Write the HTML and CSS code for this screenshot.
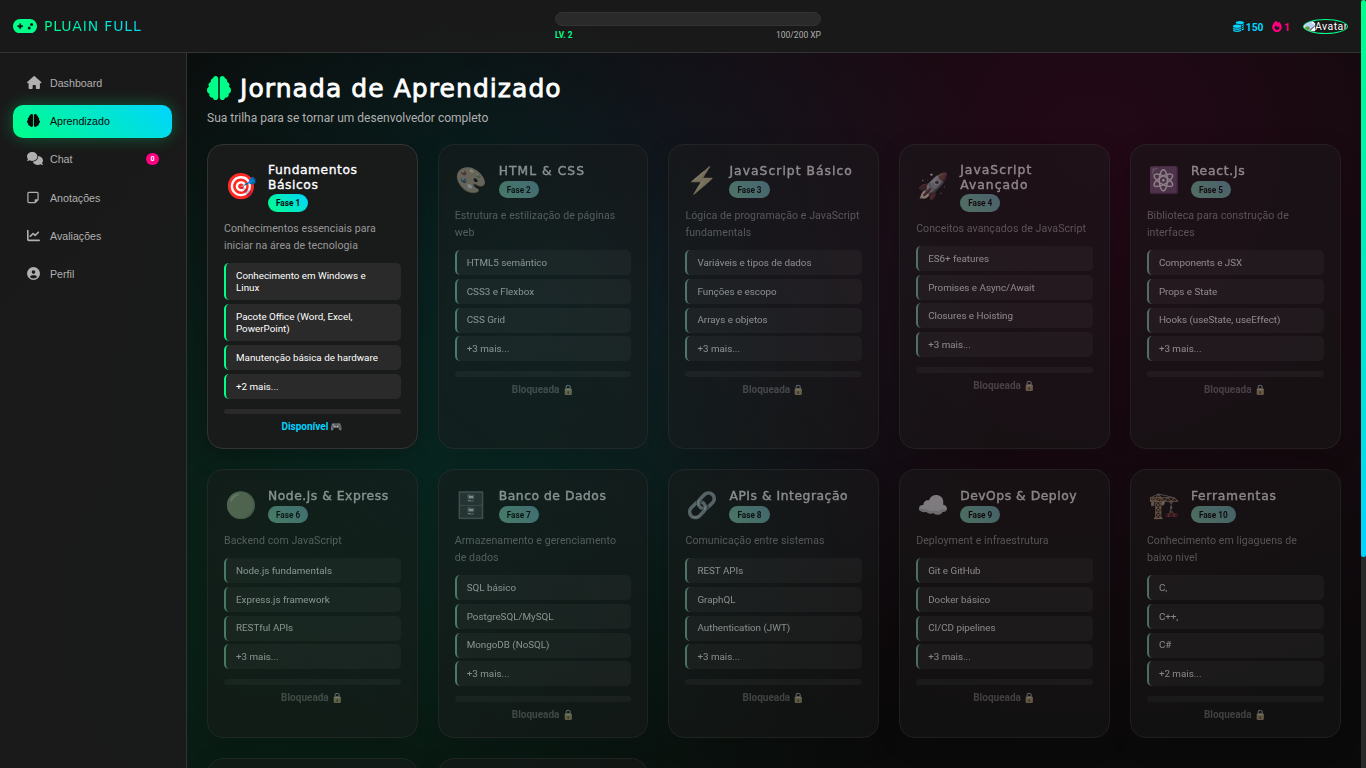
FILE: index.html
```html
<!DOCTYPE html>
<html lang="pt-BR">
<head>
<meta charset="utf-8">
<title>Pluain Full</title>
<link rel="stylesheet" href="styles.css">
</head>
<body>
<svg class="defs" width="0" height="0">
<symbol id="brain" viewBox="0 0 512 512"><path d="M184 0c30.9 0 56 25.1 56 56V456c0 30.9-25.1 56-56 56c-28.9 0-52.7-21.9-55.7-50.1c-5.2 1.4-10.7 2.1-16.3 2.1c-35.3 0-64-28.7-64-64c0-7.4 1.3-14.6 3.6-21.2C21.4 367.4 0 338.2 0 304c0-31.9 18.7-59.5 45.8-72.3C37.1 220.8 32 207 32 192c0-30.7 21.6-56.3 50.4-62.6C80.8 123.9 80 118 80 112c0-29.9 20.6-55.1 48.3-62.1C131.3 21.9 155.1 0 184 0zM328 0c28.9 0 52.6 21.9 55.7 49.9c27.8 7 48.3 32.1 48.3 62.1c0 6-.8 11.9-2.4 17.4c28.8 6.2 50.4 31.9 50.4 62.6c0 15-5.1 28.8-13.8 39.7C493.300 244.500 512 272.100 512 304c0 34.200-21.400 63.400-51.600 74.800c2.300 6.600 3.600 13.800 3.600 21.200c0 35.300-28.700 64-64 64c-5.600 0-11.100-.7-16.300-2.100c-3 28.200-26.800 50.100-55.700 50.100c-30.900 0-56-25.100-56-56V56c0-30.900 25.100-56 56-56z"/></symbol>
</svg>
<header class="topbar">
  <div class="brand">
    <svg class="brand-icon" viewBox="0 64 640 384"><path d="M192 64C86 64 0 150 0 256S86 448 192 448H448c106 0 192-86 192-192s-86-192-192-192H192zM496 168a40 40 0 1 1 0 80 40 40 0 1 1 0-80zM392 304a40 40 0 1 1 80 0 40 40 0 1 1 -80 0zM168 200c0-13.300 10.700-24 24-24s24 10.700 24 24v32h32c13.300 0 24 10.700 24 24s-10.700 24-24 24H216v32c0 13.300-10.700 24-24 24s-24-10.700-24-24V280H136c-13.300 0-24-10.700-24-24s10.700-24 24-24h32V200z"/></svg>
    <span class="brand-name">PLUAIN FULL</span>
  </div>
  <div class="xp">
    <div class="xp-bar"></div>
    <div class="xp-info"><span class="level">LV. 2</span><span class="points">100/200 XP</span></div>
  </div>
  <div class="stats">
    <span class="coins"><svg class="coin-icon" viewBox="0 0 512 512"><path d="M512 80c0 18-14.300 34.600-38.400 48c-29.100 16.100-72.500 27.500-122.300 30.900c-3.700-1.800-7.400-3.500-11.300-5C300.600 137.400 248.200 128 192 128c-8.300 0-16.400 .2-24.500 .6l-1.100-.6C142.300 114.600 128 98 128 80c0-44.200 86-80 192-80S512 35.800 512 80zM160.700 161.100c10.200-.7 20.700-1.100 31.300-1.100c62.200 0 117.400 12.300 152.500 31.400C369.300 204.900 384 221.700 384 240c0 45-86 80-192 80S0 285 0 240c0-40 70-73 160.700-78.900zM416 240c0-21-10.600-38.700-24.500-53.200c42-6 87.500-18 120.500-40V176c0 26-38 52-96 67zM384 336c0 44-86 80-192 80S0 380 0 336V290c45 48 115 62 192 62s150-15 192-62zm32-57c40-8 72-20 96-37v30c0 28-38 50-96 65zM0 386c45 48 115 62 192 62s150-15 192-62v46c0 44-86 80-192 80S0 476 0 432zM416 375c40-8 72-20 96-37v30c0 28-38 50-96 65z"/></svg><b>150</b></span>
    <span class="streak"><svg class="fire-icon" viewBox="0 0 448 512"><path d="M159.300 5.400c7.800-7.300 19.900-7.200 27.700 .1c27.600 25.900 53.500 53.800 77.700 84c11-14.400 23.500-30.100 37-42.900c7.900-7.400 20.100-7.400 28 .1c34.600 33 63.900 76.600 84.500 118c20.300 40.800 33.800 82.500 33.800 111.900C448 404.200 348.200 512 224 512C98.400 512 0 404.100 0 276.500c0-38.400 17.800-85.300 45.400-131.700C73.300 97.700 112.700 48.600 159.300 5.400zM225.700 416c25.300 0 47.700-7 68.800-21c42.100-29.400 53.400-88.200 28.100-134.400c-4.500-9-16-9.600-22.500-2l-25.200 29.300c-6.600 7.600-18.500 7.400-24.700-.5c-16.500-21-46-58.500-62.800-79.800c-6.300-8-18.300-8.100-24.700-.1c-33.800 42.500-50.800 69.300-50.800 99.400C112 375.400 162.600 416 225.700 416z"/></svg><b>1</b></span>
    <span class="avatar"><svg class="broken" viewBox="0 0 14 14"><path fill="#fff" d="M0 0h9l4 4v9H0z"/><path fill="#bcd0f4" d="M1 1h8v3h3v4L6 12H1z"/><path fill="#5aa03c" d="M1 12V9q3-3 5-1l1 2-2 2z"/><path fill="#555" d="M6 12l7-6v1l-6 6z"/></svg><span>Avatar</span></span>
  </div>
</header>
<div class="layout">
  <nav class="sidebar">
    <a class="nav-item"><svg class="nav-icon w-home" viewBox="0 0 576 512"><path d="M575.800 255.500c0 18-15 32.100-32 32.100h-32l.7 160.200c0 2.700-.2 5.400-.5 8.100V472c0 22.100-17.900 40-40 40H456c-1.100 0-2.200 0-3.300-.1c-1.400 .1-2.800 .1-4.200 .1H416 392c-22.100 0-40-17.900-40-40V448 384c0-17.700-14.300-32-32-32H256c-17.700 0-32 14.300-32 32v64 24c0 22.100-17.900 40-40 40H160 128.100c-1.500 0-3-.1-4.500-.2c-1.200 .1-2.400 .2-3.600 .2H104c-22.100 0-40-17.900-40-40V360c0-.9 0-1.900 .1-2.800V287.600H32c-18 0-32-14-32-32.100c0-9 3-17 10-24L266.400 8c7-7 15-8 22-8s15 2 21 7L564.800 231.500c8 7 12 15 11 24z"/></svg><span>Dashboard</span></a>
    <a class="nav-item active"><svg class="nav-icon"><use href="#brain"/></svg><span>Aprendizado</span></a>
    <a class="nav-item"><svg class="nav-icon w-chat" viewBox="0 0 640 512"><path d="M208 352c114.900 0 208-78.800 208-176S322.900 0 208 0S0 78.800 0 176c0 38.600 14.700 74.300 39.600 103.400c-3.500 9.400-8.700 17.700-14.200 24.700c-4.800 6.200-9.700 11-13.300 14.300c-1.800 1.600-3.300 2.900-4.300 3.700c-.5 .4-.9 .7-1.100 .8l-.2 .2C1 327.200-1.400 334.400 .8 340.900S9.100 352 16 352c21.800 0 43.800-5.600 62.100-12.500c9.200-3.500 17.800-7.400 25.200-11.400C134.100 343.300 169.800 352 208 352zM448 176c0 112.300-99.100 196.900-216.500 207C255.800 457.400 336.400 512 432 512c38.200 0 73.900-8.700 104.700-23.900c7.500 4 16 7.900 25.200 11.400c18.300 6.900 40.300 12.500 62.100 12.500c6.900 0 13.100-4.500 15.200-11.100c2.100-6.600-.2-13.800-5.800-17.900l-.2-.2c-.2-.2-.6-.4-1.100-.8c-1-.8-2.500-2-4.300-3.700c-3.600-3.300-8.500-8.100-13.300-14.300c-5.500-7-10.700-15.400-14.200-24.700c24.900-29 39.600-64.700 39.600-103.400c0-92.800-84.900-168.900-192.600-175.500c.4 5.100 .6 10.300 .6 15.500z"/></svg><span>Chat</span><i class="count">0</i></a>
    <a class="nav-item"><svg class="nav-icon w-note" viewBox="0 0 448 512"><path d="M64 80c-8.800 0-16 7.200-16 16V416c0 8.800 7.200 16 16 16H288V352c0-17.700 14.300-32 32-32h80V96c0-8.800-7.200-16-16-16H64zM288 480H64c-35.300 0-64-28.700-64-64V96C0 60.700 28.700 32 64 32H384c35.300 0 64 28.700 64 64V320v5.500c0 17-6.700 33.300-18.700 45.300l-90.500 90.500c-12 12-28.300 18.700-45.300 18.700H288z"/></svg><span>Anotações</span></a>
    <a class="nav-item"><svg class="nav-icon" viewBox="0 0 512 512"><path d="M64 64c0-17.700-14.300-32-32-32S0 46.300 0 64V400c0 44.200 35.800 80 80 80H480c17.700 0 32-14.300 32-32s-14.300-32-32-32H80c-8.800 0-16-7.200-16-16V64zm406.600 86.600c12.500-12.500 12.500-32.800 0-45.300s-32.800-12.500-45.300 0L320 210.700l-57.400-57.400c-12.500-12.500-32.800-12.500-45.300 0l-112 112c-12.500 12.500-12.500 32.800 0 45.300s32.800 12.500 45.300 0L240 221.300l57.400 57.400c12.500 12.500 32.800 12.500 45.300 0l128-128z"/></svg><span>Avaliações</span></a>
    <a class="nav-item"><svg class="nav-icon" viewBox="0 0 512 512"><path d="M399 384.200C376.900 345.800 335.400 320 288 320H224c-47.400 0-88.900 25.800-111 64.200c35.200 39.200 86.200 63.800 143 63.800s107.800-24.700 143-63.800zM0 256a256 256 0 1 1 512 0A256 256 0 1 1 0 256zm256 16a72 72 0 1 0 0-144 72 72 0 1 0 0 144z"/></svg><span>Perfil</span></a>
  </nav>
  <main class="content">
    <h1 class="page-title"><svg class="title-icon"><use href="#brain"/></svg><span>Jornada de Aprendizado</span></h1>
    <p class="subtitle">Sua trilha para se tornar um desenvolvedor completo</p>
    <div class="grid">
      <article class="card">
        <div class="head"><span class="emoji">🎯</span><div><h3 class="tight">Fundamentos<br>Básicos</h3><span class="phase">Fase 1</span></div></div>
        <p class="desc">Conhecimentos essenciais para<br>iniciar na área de tecnologia</p>
        <ul><li>Conhecimento em Windows e<br>Linux</li><li>Pacote Office (Word, Excel,<br>PowerPoint)</li><li>Manutenção básica de hardware</li><li>+2 mais...</li></ul>
        <div class="track"></div><p class="status">Disponível 🎮</p>
      </article>
      <article class="card locked">
        <div class="head"><span class="emoji">🎨</span><div><h3 class="wide">HTML &amp; CSS</h3><span class="phase">Fase 2</span></div></div>
        <p class="desc">Estrutura e estilização de páginas<br>web</p>
        <ul><li>HTML5 semântico</li><li>CSS3 e Flexbox</li><li>CSS Grid</li><li>+3 mais...</li></ul>
        <div class="track"></div><p class="status">Bloqueada 🔒</p>
      </article>
      <article class="card locked">
        <div class="head"><span class="emoji">⚡</span><div><h3 class="wide">JavaScript Básico</h3><span class="phase">Fase 3</span></div></div>
        <p class="desc">Lógica de programação e JavaScript<br>fundamentals</p>
        <ul><li>Variáveis e tipos de dados</li><li>Funções e escopo</li><li>Arrays e objetos</li><li>+3 mais...</li></ul>
        <div class="track"></div><p class="status">Bloqueada 🔒</p>
      </article>
      <article class="card locked">
        <div class="head"><span class="emoji">🚀</span><div><h3 class="wide">JavaScript<br>Avançado</h3><span class="phase">Fase 4</span></div></div>
        <p class="desc">Conceitos avançados de JavaScript</p>
        <ul><li>ES6+ features</li><li>Promises e Async/Await</li><li>Closures e Hoisting</li><li>+3 mais...</li></ul>
        <div class="track"></div><p class="status">Bloqueada 🔒</p>
      </article>
      <article class="card locked">
        <div class="head"><span class="emoji">⚛️</span><div><h3>React.js</h3><span class="phase">Fase 5</span></div></div>
        <p class="desc">Biblioteca para construção de<br>interfaces</p>
        <ul><li>Components e JSX</li><li>Props e State</li><li>Hooks (useState, useEffect)</li><li>+3 mais...</li></ul>
        <div class="track"></div><p class="status">Bloqueada 🔒</p>
      </article>
      <article class="card locked">
        <div class="head"><span class="emoji">🟢</span><div><h3 class="tight">Node.js &amp; Express</h3><span class="phase">Fase 6</span></div></div>
        <p class="desc">Backend com JavaScript</p>
        <ul><li>Node.js fundamentals</li><li>Express.js framework</li><li>RESTful APIs</li><li>+3 mais...</li></ul>
        <div class="track"></div><p class="status">Bloqueada 🔒</p>
      </article>
      <article class="card locked">
        <div class="head"><span class="emoji">🗄️</span><div><h3 class="tight">Banco de Dados</h3><span class="phase">Fase 7</span></div></div>
        <p class="desc">Armazenamento e gerenciamento<br>de dados</p>
        <ul><li>SQL básico</li><li>PostgreSQL/MySQL</li><li>MongoDB (NoSQL)</li><li>+3 mais...</li></ul>
        <div class="track"></div><p class="status">Bloqueada 🔒</p>
      </article>
      <article class="card locked">
        <div class="head"><span class="emoji">🔗</span><div><h3 class="tight">APIs &amp; Integração</h3><span class="phase">Fase 8</span></div></div>
        <p class="desc">Comunicação entre sistemas</p>
        <ul><li>REST APIs</li><li>GraphQL</li><li>Authentication (JWT)</li><li>+3 mais...</li></ul>
        <div class="track"></div><p class="status">Bloqueada 🔒</p>
      </article>
      <article class="card locked">
        <div class="head"><span class="emoji">☁️</span><div><h3 class="tight">DevOps &amp; Deploy</h3><span class="phase">Fase 9</span></div></div>
        <p class="desc">Deployment e infraestrutura</p>
        <ul><li>Git e GitHub</li><li>Docker básico</li><li>CI/CD pipelines</li><li>+3 mais...</li></ul>
        <div class="track"></div><p class="status">Bloqueada 🔒</p>
      </article>
      <article class="card locked">
        <div class="head"><span class="emoji">🏗️</span><div><h3>Ferramentas</h3><span class="phase">Fase 10</span></div></div>
        <p class="desc">Conhecimento em ligaguens de<br>baixo nivel</p>
        <ul><li>C,</li><li>C++,</li><li>C#</li><li>+2 mais...</li></ul>
        <div class="track"></div><p class="status">Bloqueada 🔒</p>
      </article>
      <article class="card locked"></article>
      <article class="card locked"></article>
    </div>
  </main>
</div>
<div class="scrollbar"><div class="thumb"></div></div>
</body>
</html>
```
FILE: styles.css
```css
* { box-sizing: border-box; margin: 0; padding: 0; }
html, body { height: 768px; overflow: hidden; }
body {
  font-family: Roboto, "Open Sans", sans-serif;
  color: #fff;
  background:
    radial-gradient(circle at 20% 80%, rgba(0,255,136,.1) 0%, transparent 50%),
    radial-gradient(circle at 80% 20%, rgba(255,0,128,.1) 0%, transparent 50%),
    radial-gradient(circle at 40% 40%, rgba(0,212,255,.1) 0%, transparent 50%),
    #0a0a0a;
  display: flex;
  flex-direction: column;
  white-space: nowrap;
}
svg { fill: currentColor; flex: none; }
.defs { position: absolute; }

.topbar {
  height: 53px; flex: none;
  display: grid; grid-template-columns: 542px 266px 1fr;
  padding: 0 18px 0 13px;
  background: rgba(26,26,26,.95);
  border-bottom: 1px solid #333;
}
.brand { display: flex; align-items: center; gap: 7px; }
.brand-icon { width: 24px; height: 14.500px; color: #00ff88; }
.brand-name {
  font: 14px "DejaVu Sans", sans-serif; letter-spacing: .85px;
  background: linear-gradient(45deg, #00ff88, #00d4ff);
  -webkit-background-clip: text; background-clip: text; color: transparent;
}
.xp { padding-top: 12px; }
.xp-bar { height: 14px; border: 1px solid #333; border-radius: 8px; background: #2a2a2a; }
.xp-info { display: flex; justify-content: space-between; font-size: 8.500px; line-height: 12px; margin-top: 3px; }
.level { color: #00ff88; font-weight: 700; font-size: 8.300px; }
.points { color: #b0b0b0; }
.stats { display: flex; align-items: center; justify-content: flex-end; font-size: 10.500px; }
.stats b { position: relative; top: 1px; }
.coins, .streak { display: flex; align-items: center; gap: 2px; }
.coins { color: #00d4ff; margin-right: 9px; }
.coins b { font-size: 10.300px; }
.streak { color: #ff0080; margin-right: 13px; gap: 1.500px; }
.coin-icon { width: 11px; height: 11px; }
.fire-icon { width: 10px; height: 11px; }
.avatar {
  width: 45px; height: 15px; border: 1px solid #00ff88; border-radius: 50%;
  overflow: hidden; display: flex; align-items: center; font-size: 10.500px; letter-spacing: .45px;
}
.avatar span { margin-top: 1px; }
.broken { width: 12px; height: 12px; margin-right: -1px; }

.layout { display: flex; flex: 1; min-height: 0; }
.sidebar {
  width: 187px; flex: none; padding: 14px 14px 0 13px;
  display: flex; flex-direction: column; gap: 5.200px;
  background: rgba(26,26,26,.95); border-right: 1px solid #333;
}
.nav-item {
  height: 33px; display: flex; align-items: center; padding: 0 13px 1px 14px;
  border-radius: 10px; color: #b0b0b0;
  font: 10.670px "Liberation Sans", Arial, sans-serif;
}
.nav-icon { width: 13px; height: 13px; margin: -1px 10px 0 0; }
.w-home { width: 14.500px; margin-right: 8.500px; }
.w-chat { width: 16px; margin-right: 7px; }
.w-note { width: 12px; margin-right: 11px; }
.active { color: #0a0a0a; background: linear-gradient(45deg, #00ff88, #00d4ff); box-shadow: 0 0 16px rgba(0,255,136,.3); }
.count {
  margin-left: auto; width: 13px; height: 12px; border-radius: 6px;
  background: #ff0080; color: #fff; font: bold 7px/12px Roboto, sans-serif; text-align: center;
}

.content { flex: 1; padding: 20px 25.400px 0 20px; min-width: 0; overflow: hidden; }
.page-title { display: flex; align-items: center; gap: 9px; height: 31px; font: 25px "DejaVu Sans", sans-serif; letter-spacing: 1.060px; -webkit-text-stroke: .8px #fff; }
.title-icon { width: 24px; height: 24px; color: #00ff88; margin-top: -1px; -webkit-text-stroke: 0; }
.subtitle { margin-top: 5px; font-size: 12px; line-height: 18px; color: #b0b0b0; }
.grid { display: grid; grid-template-columns: repeat(5, minmax(0, 1fr)); grid-template-rows: 305px 269px 240px; gap: 20px; margin-top: 17px; }
.card { border: 1px solid #333; border-radius: 16px; background: rgba(26,26,26,.95); padding: 16px; box-shadow: 0 6px 24px rgba(0,0,0,.3); }
.locked { opacity: .5; filter: grayscale(.7); }
.head { display: flex; align-items: center; gap: 10px; min-height: 38px; }
.emoji { width: 34px; padding-left: 1px; font-size: 25.600px; line-height: 37px; font-family: "Noto Color Emoji", sans-serif; }
.head h3 { font: 12.300px/14.700px "DejaVu Sans", sans-serif; letter-spacing: .75px; -webkit-text-stroke: .35px; padding-top: 2px; }
.head h3.wide { letter-spacing: 1.050px; }
.head h3.tight { letter-spacing: .55px; }
.phase {
  display: block; width: max-content; height: 17.500px; margin-top: 2px; padding: 0 8px;
  border-radius: 10px; background: linear-gradient(45deg, #00ff88, #00d4ff); color: #0a0a0a;
  font: bold 8.200px/18.500px Roboto, sans-serif;
}
.desc { margin-top: 8px; font-size: 10.600px; line-height: 17px; color: #999; letter-spacing: .06px; }
.card ul { list-style: none; margin-top: 9px; display: grid; gap: 3.800px; }
.card li { background: #2a2a2a; border-left: 2px solid #00ff88; border-radius: 5px; padding: 6.900px 10px 5.900px; font-size: 9.800px; line-height: 12.200px; }
.track { height: 5.500px; margin-top: 10px; border-radius: 3px; background: #2a2a2a; }
.status { margin-top: 6px; text-align: center; color: #00d4ff; font: bold 10px/14px Roboto, "Noto Color Emoji", sans-serif; }
.locked .status { color: #777; }

.scrollbar { position: fixed; right: 0; top: 0; width: 5px; height: 768px; background: #2a2a2a; }
.thumb { height: 557px; border-radius: 3px; background: linear-gradient(#00ff88, #00d4ff); }
```
